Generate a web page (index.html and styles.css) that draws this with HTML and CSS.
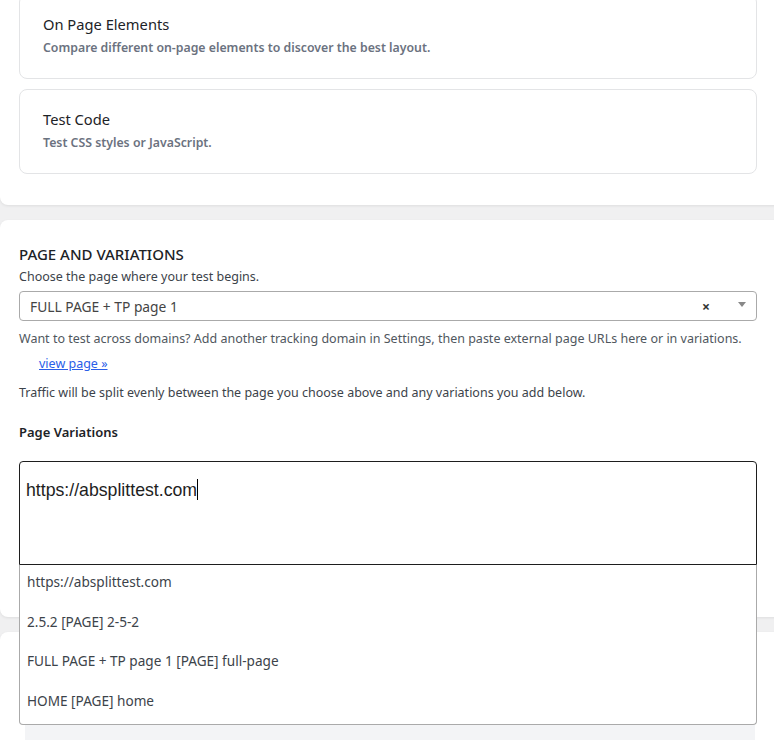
FILE: index.html
```html
<!DOCTYPE html>
<html>
<head>
<title>New Split Test</title>
<link rel="stylesheet" href="styles.css">
</head>
<body>

<div class="panel panel-top">
  <div class="card">
    <div class="card-title">On Page Elements</div>
    <div class="card-desc">Compare different on-page elements to discover the best layout.</div>
  </div>
  <div class="card">
    <div class="card-title">Test Code</div>
    <div class="card-desc">Test CSS styles or JavaScript.</div>
  </div>
</div>

<div class="panel panel-pages">
  <h2 class="section-title">PAGE AND VARIATIONS</h2>
  <p class="line">Choose the page where your test begins.</p>

  <div class="select">
    <span class="select-value">FULL PAGE + TP page 1</span>
    <span class="select-clear">×</span>
    <span class="select-arrow"></span>
  </div>

  <p class="line muted gap-8">Want to test across domains? Add another tracking domain in Settings, then paste external page URLs here or in variations.</p>
  <p class="line view-link"><a href="#">view page »</a></p>
  <p class="line gap-9">Traffic will be split evenly between the page you choose above and any variations you add below.</p>

  <h3 class="field-label">Page Variations</h3>

  <div class="variations">
    <div class="url-input">https://absplittest.com<span class="caret"></span></div>
    <ul class="suggestions">
      <li>https://absplittest.com</li>
      <li>2.5.2 [PAGE] 2-5-2</li>
      <li>FULL PAGE + TP page 1 [PAGE] full-page</li>
      <li>HOME [PAGE] home</li>
    </ul>
  </div>
</div>

<div class="panel panel-next">
  <div class="gray-box"></div>
</div>

</body>
</html>
```

FILE: styles.css
```css
body {
  margin: 0;
  background-color: #f0f0f1;
  font-family: "Noto Sans", sans-serif;
  font-size: 12.5px;
  color: #3c434a;
  overflow: hidden;
  height: 740px;
}

.panel {
  background-color: #fff;
  margin-right: -10px; /* right edge runs past the window */
  padding: 0 27px 0 19px;
  box-shadow: 0 1px 3px rgba(0, 0, 0, 0.08);
}

.panel-top {
  margin-top: -6px;
  padding-bottom: 31px;
  border-radius: 0 0 8px 8px;
  display: flex;
  flex-direction: column;
  gap: 10px;
}

.card {
  border: 1px solid #e3e4e6;
  border-radius: 8px;
  padding: 19px 23px 20px;
}

.card-title {
  font-size: 14.7px;
  line-height: 20px;
  color: #1d2327;
}

.card-desc {
  margin-top: 4px;
  font-size: 12.3px;
  line-height: 20px;
  font-weight: 600;
  color: #6b7280;
}

.panel-pages {
  margin-top: 15px;
  border-radius: 8px;
  padding-top: 24px;
  padding-bottom: 52px;
}

.section-title {
  margin: 0;
  font-size: 15px;
  font-weight: 500;
  line-height: 20px;
  color: #1d2327;
}

.line {
  margin: 3px 0 0;
  line-height: 20px;
}

.muted {
  color: #50575e;
}

.gap-8 { margin-top: 8px; }
.gap-9 { margin-top: 9px; }

.view-link {
  margin-top: 5px;
  padding-left: 20px;
}

.view-link a {
  color: #2a5ee8;
}

.select {
  margin-top: 4px;
  height: 28px;
  border: 1px solid #aaa;
  border-radius: 4px;
  display: flex;
  align-items: center;
  padding: 0 10px;
  font-size: 13.8px;
  color: #444;
}

.select-value {
  flex-grow: 1;
}

.select-clear {
  font-weight: bold;
  font-size: 14px;
  color: #333;
  margin-right: 28px;
}

.select-arrow {
  border-left: 4px solid transparent;
  border-right: 4px solid transparent;
  border-top: 5px solid #888;
  margin-top: -3px;
}

.field-label {
  margin: 19px 0 0;
  font-size: 13px;
  font-weight: 600;
  line-height: 20px;
  color: #1d2327;
}

.variations {
  position: relative;
  margin-top: 19px;
}

.url-input {
  border: 1px solid #1e1e1e;
  border-radius: 4px 4px 0 0;
  padding: 16px 6px 0;
  box-sizing: border-box;
  height: 104px;
  font-family: "Liberation Sans", Arial, sans-serif;
  font-size: 17.7px;
  line-height: 24px;
  color: #1e1e1e;
}

.caret {
  display: inline-block;
  width: 1px;
  height: 21px;
  background-color: #000;
  vertical-align: -4px;
}

.suggestions {
  position: absolute;
  left: 0;
  right: 0;
  top: 104px;
  margin: 0;
  padding: 0 0 1px;
  list-style: none;
  background-color: #fff;
  border: 1px solid #aaa;
  border-top: none;
  border-radius: 0 0 4px 4px;
  z-index: 5;
}

.suggestions li {
  height: 39.5px;
  box-sizing: border-box;
  padding: 7px 7px 0;
  line-height: 20px;
  font-size: 13.6px;
  color: #3c434a;
}

.panel-next {
  margin-top: 15px;
  border-radius: 8px;
  padding: 93px 29px 40px 25px;
}

.gray-box {
  height: 60px;
  background-color: #f3f4f6;
}
```
